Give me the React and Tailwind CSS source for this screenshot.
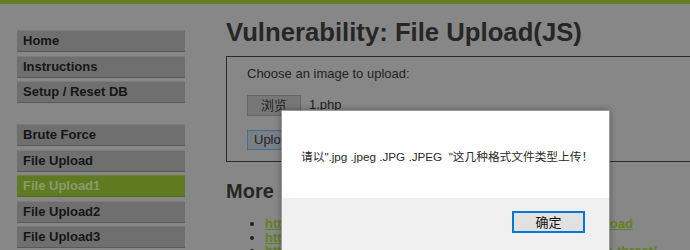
const menuTop = ['Home', 'Instructions', 'Setup / Reset DB']
const menuVulns = ['Brute Force', 'File Upload', 'File Upload1', 'File Upload2', 'File Upload3']

const links = [
	'https://www.owasp.org/index.php/Unrestricted_File_Upload',
	'https://blogs.securiteam.com/index.php/archives/1268',
	'https://www.acunetix.com/websitesecurity/upload-forms-threat/',
]

const MenuItem = ({ label, active }) => (
	<div
		className={`h-[22px] w-[168px] flex items-center pl-[6px] text-[13px] font-bold border-t border-b ${
			active
				? 'bg-[#5f7a20] border-t-[#6b852b] border-b-[#536a1a] text-[#8a9a70]'
				: 'bg-[#6f6f6f] border-t-[#7b7b7b] border-b-[#595959] text-[#161616]'
		}`}
	>
		{label}
	</div>
)

const App = () => {
	return (
		<div
			className="relative w-[690px] h-[250px] overflow-hidden bg-[#878787]"
			style={{ fontFamily: '"Liberation Sans", Arial, sans-serif' }}
		>
			<div className="h-[4px] bg-[#687c2a]" />

			<div className="flex">
				{/* sidebar */}
				<div className="pl-[17px] pt-[26px] w-[226px] shrink-0">
					<div className="flex flex-col gap-[3.5px]">
						{menuTop.map((m) => (
							<MenuItem key={m} label={m} />
						))}
					</div>
					<div className="flex flex-col gap-[3.5px] mt-[21px]">
						{menuVulns.map((m) => (
							<MenuItem key={m} label={m} active={m === 'File Upload1'} />
						))}
					</div>
				</div>

				{/* body */}
				<div className="flex-1 min-w-0">
					<h1 className="text-[25.7px] font-bold text-[#262626] leading-[30px] mt-[13px] whitespace-nowrap">
						Vulnerability: File Upload(JS)
					</h1>
					<div className="mt-[9px] border border-[#2b2b2b] w-[520px] h-[106px] pl-[20px] pt-[7px] text-[13px] text-[#222]">
						<p>Choose an image to upload:</p>
						<div className="flex items-center mt-[11px]">
							<div className="h-[21px] w-[54px] flex items-center justify-center bg-[#777] border border-[#666] text-[13px] text-[#222]" style={{ fontFamily: '"Noto Sans CJK SC", sans-serif' }}>
								浏览
							</div>
							<span className="ml-[8px] text-[#222]">1.php</span>
						</div>
						<div className="mt-[14px] h-[20px] w-[70px] flex items-center pl-[6px] bg-[#7a7f84] border border-[#3d6d9a] text-[#222]">
							Upload
						</div>
					</div>
					<h2 className="text-[20px] font-bold text-[#262626] mt-[17px] leading-[24px]">More</h2>
					<ul className="mt-[14px] pl-[39px] text-[13px] leading-[13.5px] list-disc marker:text-[#222]">
						{links.map((l) => (
							<li key={l} className="whitespace-nowrap">
								<span className="font-bold text-[#63801f] underline">{l}</span>
							</li>
						))}
					</ul>
				</div>
			</div>

			{/* alert dialog */}
			<div className="absolute left-[281px] top-[110px] w-[329px] h-[150px] flex flex-col bg-[#f0f0f0] border border-[#9a9a9a] shadow-[0_0_6px_rgba(0,0,0,0.35)]">
				<div
					className="h-[87px] bg-white flex items-center pl-[19px] pt-[4px] text-[11.7px] text-[#2a2a2a] whitespace-nowrap"
					style={{ fontFamily: '"Liberation Sans", "Noto Sans CJK SC", sans-serif' }}
				>
					请以".jpg .jpeg .JPG .JPEG&nbsp;&nbsp;"这几种格式文件类型上传！
				</div>
				<div className="flex justify-end pt-[13px] pr-[24px]">
					<div
						className="w-[73px] h-[22px] flex items-center justify-center bg-[#e1e1e1] border-2 border-[#0078d7] text-[13px] text-[#111]"
						style={{ fontFamily: '"Noto Sans CJK SC", sans-serif' }}
					>
						确定
					</div>
				</div>
			</div>
		</div>
	)
}

export default App
